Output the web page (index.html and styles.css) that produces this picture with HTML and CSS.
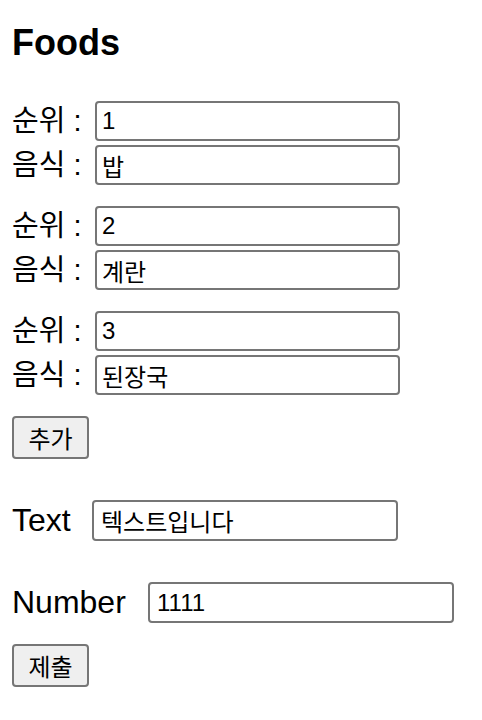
FILE: index.html
```html
<!DOCTYPE html>
<html lang="ko">
<head>
  <meta charset="UTF-8">
  <title>Foods</title>
  <link rel="stylesheet" href="styles.css">
</head>
<body>
  <h2>Foods</h2>

  <div class="food">
    <div class="linha"><label>순위 :</label><input type="text" value="1"></div>
    <div class="linha"><label>음식 :</label><input type="text" value="밥"></div>
  </div>
  <div class="food">
    <div class="linha"><label>순위 :</label><input type="text" value="2"></div>
    <div class="linha"><label>음식 :</label><input type="text" value="계란"></div>
  </div>
  <div class="food">
    <div class="linha"><label>순위 :</label><input type="text" value="3"></div>
    <div class="linha"><label>음식 :</label><input type="text" value="된장국"></div>
  </div>

  <button class="botao">추가</button>

  <div class="campo">
    <label class="label-text">Text</label>
    <input type="text" value="텍스트입니다">
  </div>
  <div class="campo">
    <label class="label-number">Number</label>
    <input type="text" value="1111">
  </div>

  <button class="botao">제출</button>
</body>
</html>
```

FILE: styles.css
```css
body {
  margin: 0;
  padding: 0 12px;
  font-family: "Liberation Sans", "Noto Sans CJK KR", sans-serif;
  color: #000;
  background: #fff;
}
h2 {
  font-size: 36px;
  line-height: 42px;
  margin: 22px 0 37px;
}
input {
  box-sizing: border-box;
  width: 305px;
  height: 40px;
  padding: 0 5px;
  border: 2px solid #767676;
  border-radius: 4px;
  font-family: "Liberation Sans", "Noto Sans CJK KR", sans-serif;
  font-size: 24px;
  color: #000;
  background: #fff;
}
.food {
  display: flex;
  flex-direction: column;
  gap: 4px;
  margin-bottom: 21px;
}
.linha {
  display: flex;
  align-items: center;
}
.linha label {
  width: 83px;
  font-size: 29px;
  line-height: 40px;
}
.botao {
  display: block;
  box-sizing: border-box;
  width: 77px;
  height: 43px;
  padding: 0;
  border: 2px solid #767676;
  border-radius: 4px;
  background: #efefef;
  font-family: "Liberation Sans", "Noto Sans CJK KR", sans-serif;
  font-size: 24px;
  color: #000;
}
.campo {
  display: flex;
  align-items: center;
  margin: 41px 0;
}
.campo + .campo {
  margin-top: 0;
  margin-bottom: 21px;
}
.campo label {
  font-size: 32px;
  line-height: 41px;
}
.campo input {
  height: 41px;
  width: 306px;
  padding: 0 7px;
}
.label-text {
  width: 80px;
}
.label-number {
  width: 136px;
}
```
